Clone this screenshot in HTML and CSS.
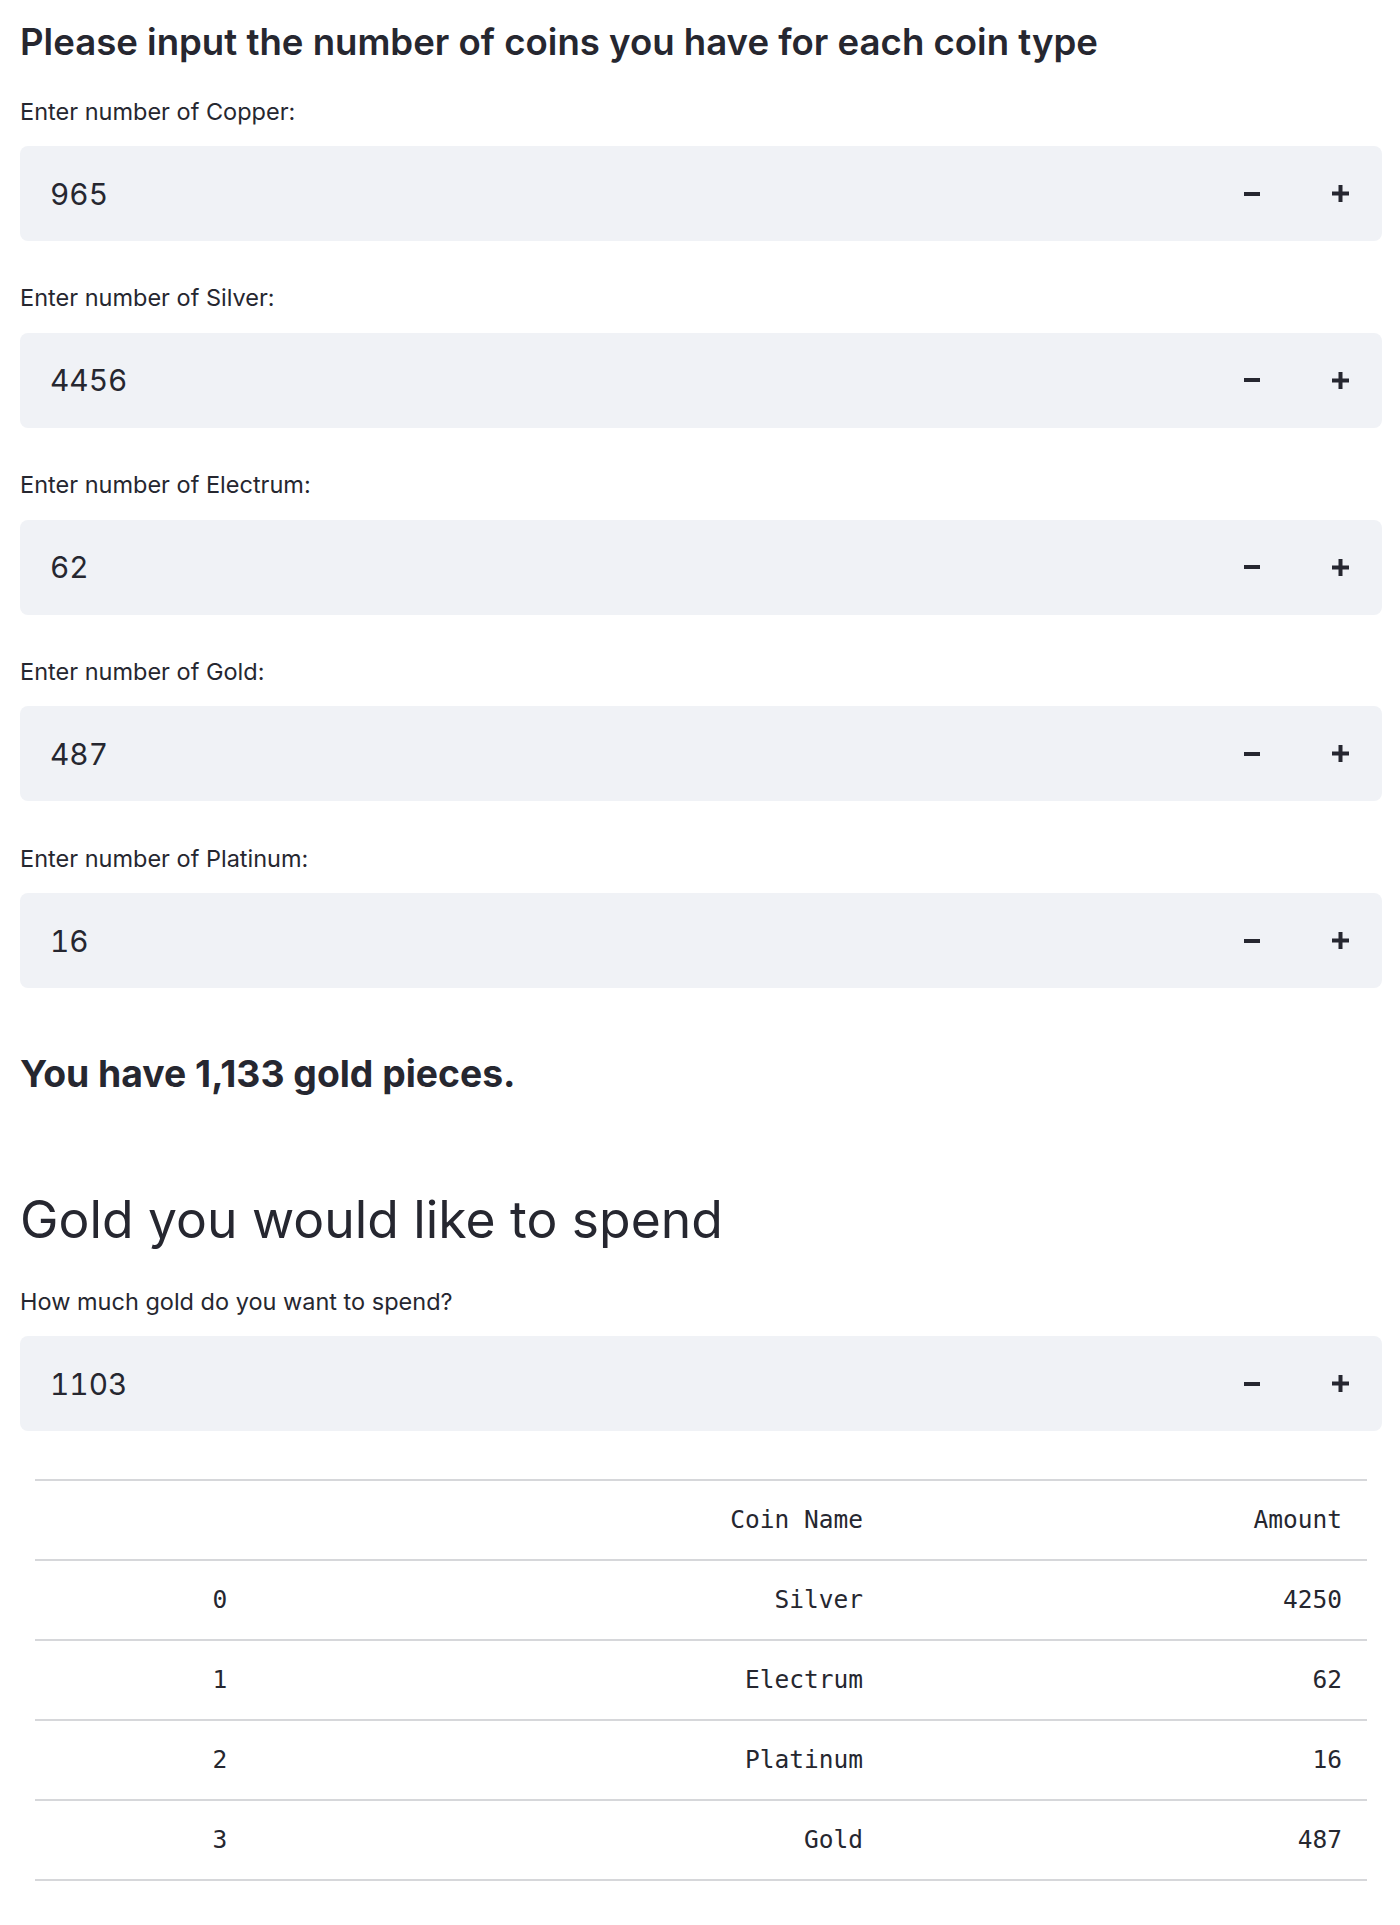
FILE: index.html
```html
<!DOCTYPE html>
<html lang="en">
<head>
<meta charset="utf-8">
<title>Coin Calculator</title>
<link rel="stylesheet" href="styles.css">
</head>
<body>
<main class="main">
  <h3 class="title">Please input the number of coins you have for each coin type</h3>

  <div class="field">
    <label class="label">Enter number of Copper:</label>
    <div class="numbox">
      <span class="value">965</span>
      <div class="steps">
        <button class="step" aria-label="decrement"><svg width="16" height="4" viewBox="0 0 16 4"><rect width="16" height="4" fill="#262730"/></svg></button>
        <button class="step" aria-label="increment"><svg width="17" height="17" viewBox="0 0 17 17"><rect x="0" y="6.5" width="17" height="4" fill="#262730"/><rect x="6.5" y="0" width="4" height="17" fill="#262730"/></svg></button>
      </div>
    </div>
  </div>

  <div class="field">
    <label class="label">Enter number of Silver:</label>
    <div class="numbox">
      <span class="value">4456</span>
      <div class="steps">
        <button class="step" aria-label="decrement"><svg width="16" height="4" viewBox="0 0 16 4"><rect width="16" height="4" fill="#262730"/></svg></button>
        <button class="step" aria-label="increment"><svg width="17" height="17" viewBox="0 0 17 17"><rect x="0" y="6.5" width="17" height="4" fill="#262730"/><rect x="6.5" y="0" width="4" height="17" fill="#262730"/></svg></button>
      </div>
    </div>
  </div>

  <div class="field">
    <label class="label">Enter number of Electrum:</label>
    <div class="numbox">
      <span class="value">62</span>
      <div class="steps">
        <button class="step" aria-label="decrement"><svg width="16" height="4" viewBox="0 0 16 4"><rect width="16" height="4" fill="#262730"/></svg></button>
        <button class="step" aria-label="increment"><svg width="17" height="17" viewBox="0 0 17 17"><rect x="0" y="6.5" width="17" height="4" fill="#262730"/><rect x="6.5" y="0" width="4" height="17" fill="#262730"/></svg></button>
      </div>
    </div>
  </div>

  <div class="field">
    <label class="label">Enter number of Gold:</label>
    <div class="numbox">
      <span class="value">487</span>
      <div class="steps">
        <button class="step" aria-label="decrement"><svg width="16" height="4" viewBox="0 0 16 4"><rect width="16" height="4" fill="#262730"/></svg></button>
        <button class="step" aria-label="increment"><svg width="17" height="17" viewBox="0 0 17 17"><rect x="0" y="6.5" width="17" height="4" fill="#262730"/><rect x="6.5" y="0" width="4" height="17" fill="#262730"/></svg></button>
      </div>
    </div>
  </div>

  <div class="field">
    <label class="label">Enter number of Platinum:</label>
    <div class="numbox">
      <span class="value">16</span>
      <div class="steps">
        <button class="step" aria-label="decrement"><svg width="16" height="4" viewBox="0 0 16 4"><rect width="16" height="4" fill="#262730"/></svg></button>
        <button class="step" aria-label="increment"><svg width="17" height="17" viewBox="0 0 17 17"><rect x="0" y="6.5" width="17" height="4" fill="#262730"/><rect x="6.5" y="0" width="4" height="17" fill="#262730"/></svg></button>
      </div>
    </div>
  </div>

  <p class="total">You have 1,133 gold pieces.</p>

  <h1 class="section">Gold you would like to spend</h1>

  <div class="field field-spend">
    <label class="label">How much gold do you want to spend?</label>
    <div class="numbox">
      <span class="value">1103</span>
      <div class="steps">
        <button class="step" aria-label="decrement"><svg width="16" height="4" viewBox="0 0 16 4"><rect width="16" height="4" fill="#262730"/></svg></button>
        <button class="step" aria-label="increment"><svg width="17" height="17" viewBox="0 0 17 17"><rect x="0" y="6.5" width="17" height="4" fill="#262730"/><rect x="6.5" y="0" width="4" height="17" fill="#262730"/></svg></button>
      </div>
    </div>
  </div>

  <div class="table">
    <div class="row head">
      <div class="cell idx"></div>
      <div class="cell">Coin Name</div>
      <div class="cell">Amount</div>
    </div>
    <div class="row">
      <div class="cell idx">0</div>
      <div class="cell">Silver</div>
      <div class="cell">4250</div>
    </div>
    <div class="row">
      <div class="cell idx">1</div>
      <div class="cell">Electrum</div>
      <div class="cell">62</div>
    </div>
    <div class="row">
      <div class="cell idx">2</div>
      <div class="cell">Platinum</div>
      <div class="cell">16</div>
    </div>
    <div class="row">
      <div class="cell idx">3</div>
      <div class="cell">Gold</div>
      <div class="cell">487</div>
    </div>
  </div>
</main>
</body>
</html>
```
FILE: styles.css
```css
* { box-sizing: border-box; }

html, body {
  margin: 0;
  padding: 0;
  background: #ffffff;
}

body {
  font-family: "Inter", "Noto Sans", sans-serif;
  color: #262730;
}

.main {
  padding: 19.5px 18px 0 20px;
}

.title {
  margin: 0;
  font-size: 36.6px;
  font-weight: 600;
  line-height: 44px;
}

.field {
  margin-top: 33px;
  display: flex;
  flex-direction: column;
}

.field + .field {
  margin-top: 42.25px;
}

.label {
  display: block;
  font-size: 23.5px;
  font-weight: 400;
  line-height: 30px;
  margin-bottom: 19.5px;
}

.numbox {
  height: 95px;
  background: #f0f2f6;
  border-radius: 8px;
  display: flex;
  align-items: center;
  justify-content: space-between;
  padding-left: 30px;
}

.value {
  font-size: 29.8px;
  line-height: 40px;
  font-variant-numeric: tabular-nums;
}

.steps {
  display: flex;
  gap: 4.5px;
  height: 100%;
}

.step {
  width: 84px;
  height: 100%;
  border: 0;
  padding: 0;
  margin: 0;
  background: transparent;
  display: flex;
  align-items: center;
  justify-content: center;
}

.step svg { display: block; }

.total {
  margin: 61.5px 0 0;
  font-size: 37.3px;
  font-weight: 700;
  line-height: 48px;
}

.section {
  margin: 86px 0 0;
  font-size: 51.6px;
  font-weight: 400;
  line-height: 70px;
}

.field-spend {
  margin-top: 33px;
}

.table {
  margin: 48px 15px 0 15px;
  border-top: 2px solid #d6d7da;
  font-family: "DejaVu Sans Mono", "Liberation Mono", monospace;
  font-size: 24.5px;
  color: #262730;
}

.row {
  display: grid;
  grid-template-columns: 370px 482px 1fr;
  height: 80px;
  border-bottom: 2px solid #d6d7da;
  align-items: center;
}

.cell {
  text-align: right;
  padding-right: 24px;
  line-height: 30px;
}

.cell:last-child {
  padding-right: 25px;
}

.cell.idx {
  text-align: center;
  padding-right: 0;
}
```
